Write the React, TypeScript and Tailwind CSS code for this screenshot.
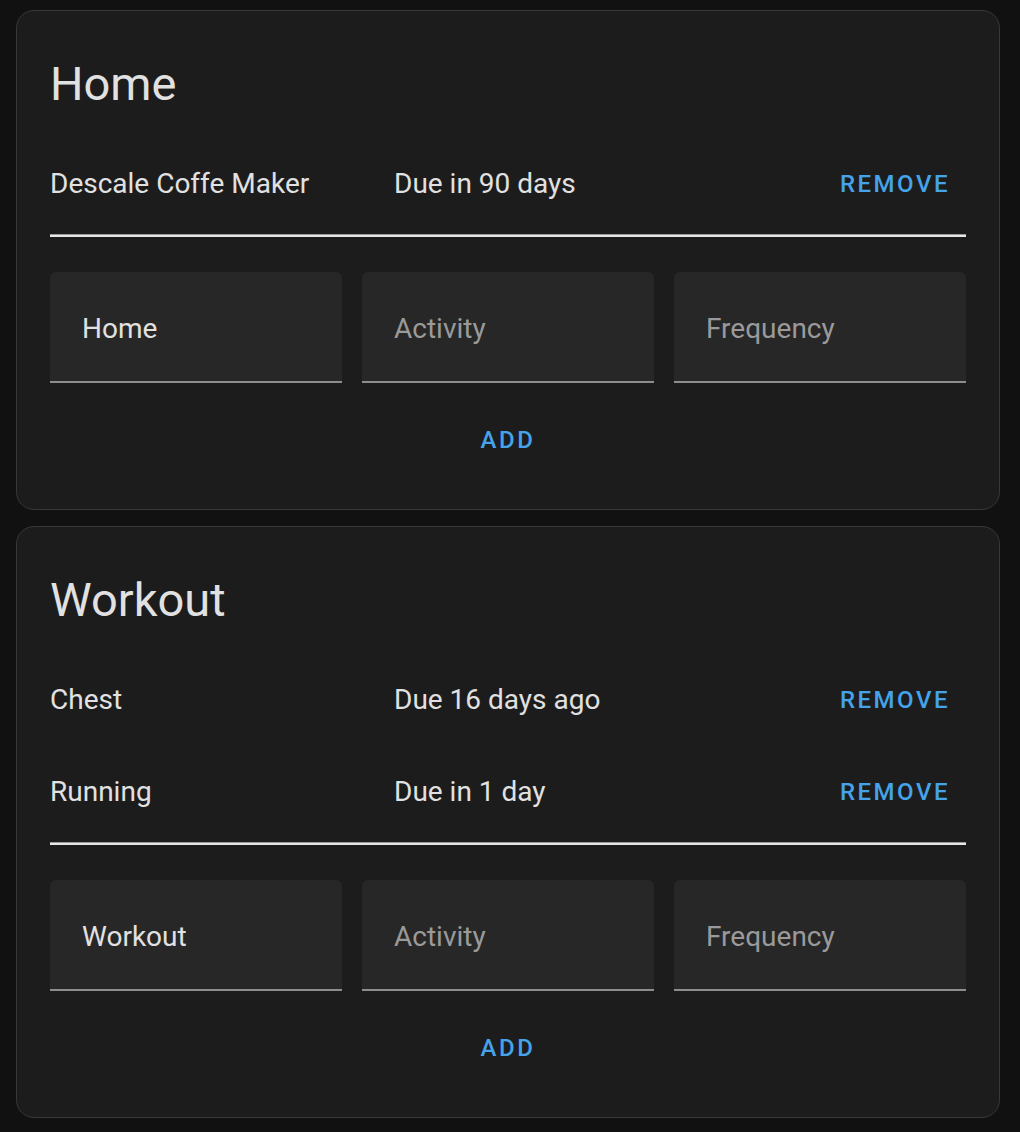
const cards = [
  {
    title: 'Home',
    items: [{ name: 'Descale Coffe Maker', due: 'Due in 90 days' }],
  },
  {
    title: 'Workout',
    items: [
      { name: 'Chest', due: 'Due 16 days ago' },
      { name: 'Running', due: 'Due in 1 day' },
    ],
  },
]

function Field({ value, placeholder }: { value?: string; placeholder: string }) {
  return (
    <div className="flex h-[111px] items-center rounded-t-[6px] border-b-2 border-[#8e8e8e] bg-[#272727] pl-[32px] pt-[4px]">
      {value ? (
        <span className="text-[28px] text-[#e1e1e1]">{value}</span>
      ) : (
        <span className="text-[28px] text-[#9a9a9a]">{placeholder}</span>
      )}
    </div>
  )
}

function Card({ title, items }: { title: string; items: { name: string; due: string }[] }) {
  return (
    <div className="rounded-[18px] border border-[#383838] bg-[#1c1c1c] px-[33px] pt-[41px] pb-[41px]">
      <div className="h-[64px] text-[47px] leading-[64px] text-[#e1e1e1]">{title}</div>
      <div className="mt-[22px]">
        {items.map((item) => (
          <div key={item.name} className="flex h-[92px] items-center text-[28px] leading-[92px] text-[#e1e1e1]">
            <div className="w-[344px]">{item.name}</div>
            <div className="flex-1">{item.due}</div>
            <button className="pl-[18px] pr-[16px] text-[24px] font-medium tracking-[0.105em] text-[#44a3e9]">REMOVE</button>
          </div>
        ))}
      </div>
      <div className="mt-[4px] h-[3px] border-t border-[#9a9a9a] bg-[#e6e6e6]" />
      <div className="mt-[35px] grid grid-cols-3 gap-[20px]">
        <Field value={title} placeholder="Category" />
        <Field placeholder="Activity" />
        <Field placeholder="Frequency" />
      </div>
      <div className="mt-[29px] flex justify-center">
        <button className="h-[56px] px-[18px] text-[24px] font-medium leading-[56px] tracking-[0.105em] text-[#44a3e9]">
          ADD
        </button>
      </div>
    </div>
  )
}

export default function App() {
  return (
    <div className="min-h-[1132px] bg-[#111111] pt-[10px] pl-[16px] pr-[20px]" style={{ fontFamily: 'Roboto, "Noto Sans", sans-serif' }}>
      <div className="flex flex-col gap-[16px]">
        {cards.map((c) => (
          <Card key={c.title} title={c.title} items={c.items} />
        ))}
      </div>
    </div>
  )
}
